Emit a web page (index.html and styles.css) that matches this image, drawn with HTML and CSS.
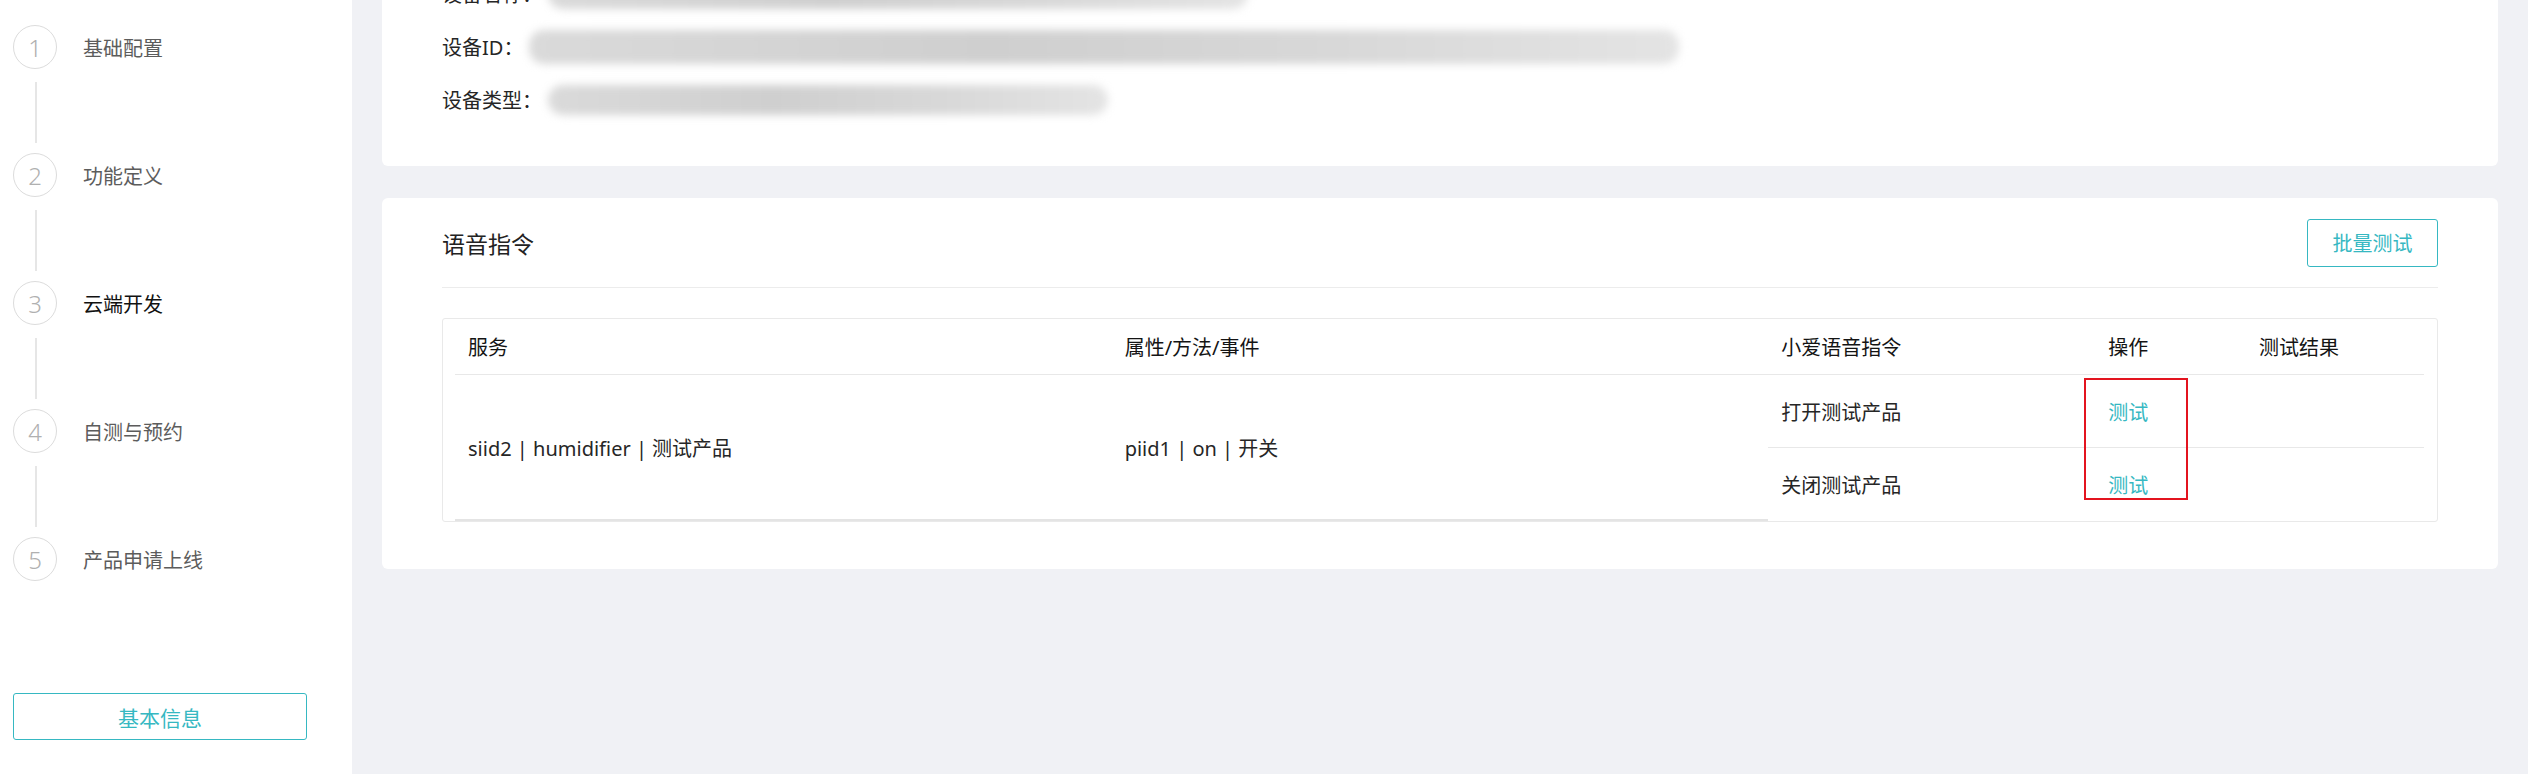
FILE: index.html
```html
<!DOCTYPE html>
<html>

<head>
    <meta charset='UTF-8'>
    <title>云端开发</title>
    <link rel="stylesheet" href="styles.css">
</head>

<body>
    <!-- Steps sidebar -->
    <aside class='sidebar'>
        <div class='steps'>
            <div class='step'>
                <span class='step-num'>1</span>
                <span class='step-label'>基础配置</span>
            </div>
            <div class='step-line'></div>
            <div class='step'>
                <span class='step-num'>2</span>
                <span class='step-label'>功能定义</span>
            </div>
            <div class='step-line'></div>
            <div class='step active'>
                <span class='step-num'>3</span>
                <span class='step-label'>云端开发</span>
            </div>
            <div class='step-line'></div>
            <div class='step'>
                <span class='step-num'>4</span>
                <span class='step-label'>自测与预约</span>
            </div>
            <div class='step-line'></div>
            <div class='step'>
                <span class='step-num'>5</span>
                <span class='step-label'>产品申请上线</span>
            </div>
        </div>
        <button class='info-btn'>基本信息</button>
    </aside>

    <main class='content'>
        <!-- Device info card -->
        <section class='card device-card'>
            <div class='info-row'>设备名称：<span class='redact redact-a'></span></div>
            <div class='info-row'>设备ID：<span class='redact redact-b'></span></div>
            <div class='info-row'>设备类型：<span class='redact redact-c'></span></div>
        </section>

        <!-- Voice commands card -->
        <section class='card voice-card'>
            <div class='card-header'>
                <h2 class='card-title'>语音指令</h2>
                <button class='outline-btn'>批量测试</button>
            </div>

            <div class='table-box'>
                <table class='voice-table'>
                    <colgroup>
                        <col class='col-service'>
                        <col class='col-prop'>
                        <col class='col-cmd'>
                        <col class='col-op'>
                        <col class='col-result'>
                    </colgroup>
                    <thead>
                        <tr>
                            <th>服务</th>
                            <th>属性/方法/事件</th>
                            <th>小爱语音指令</th>
                            <th>操作</th>
                            <th>测试结果</th>
                        </tr>
                    </thead>
                    <tbody>
                        <tr>
                            <td rowspan='2' class='span-cell'>siid2 | humidifier | 测试产品</td>
                            <td rowspan='2' class='span-cell'>piid1 | on | 开关</td>
                            <td class='row-line'>打开测试产品</td>
                            <td class='row-line op-cell'>
                                <a href='#' class='test-link'>测试</a>
                                <span class='mark-box'></span>
                            </td>
                            <td class='row-line'></td>
                        </tr>
                        <tr>
                            <td>关闭测试产品</td>
                            <td><a href='#' class='test-link'>测试</a></td>
                            <td></td>
                        </tr>
                    </tbody>
                </table>
            </div>
        </section>
    </main>
</body>

</html>
```

FILE: styles.css
```css
:root {
    --teal: #36b8c2;
    --line: #e8e8e8;
    --text: #262626;
}

body {
    font-family: "Noto Sans", "Noto Sans CJK SC", sans-serif;
    margin: 0;
    height: 100vh;
    overflow: hidden;
    display: flex;
    background-color: #f0f1f5;
    color: var(--text);
}

/* sidebar */
.sidebar {
    width: 352px;
    flex-shrink: 0;
    background: #ffffff;
    box-sizing: border-box;
    padding: 25px 0 34px 13px;
    display: flex;
    flex-direction: column;
    justify-content: space-between;
}

.step {
    display: flex;
    align-items: center;
    height: 44px;
}

.step-num {
    width: 42px;
    height: 42px;
    border: 1px solid #dcdcdc;
    border-radius: 50%;
    display: flex;
    align-items: center;
    justify-content: center;
    font-size: 24px;
    font-weight: 300;
    color: #b0b0b0;
}

.step-label {
    margin-left: 26px;
    font-size: 20px;
    color: #5c5c5c;
}

.step.active .step-label {
    color: #111111;
}

.step-line {
    width: 2px;
    height: 61px;
    margin: 13px 0 10px 22px;
    background: #e6e6e6;
}

.info-btn {
    width: 294px;
    height: 47px;
    background: #ffffff;
    border: 1px solid var(--teal);
    border-radius: 3px;
    color: var(--teal);
    font-family: inherit;
    font-size: 21px;
    cursor: pointer;
}

/* main area */
.content {
    flex: 1;
    padding: 0 30px;
    display: flex;
    flex-direction: column;
    gap: 32px;
}

.card {
    background: #ffffff;
    border-radius: 6px;
    padding: 0 60px;
}

.device-card {
    margin-top: -33px;
    padding-bottom: 40px;
    border-radius: 0 0 6px 6px;
}

.info-row {
    height: 53px;
    font-size: 20px;
    display: flex;
    align-items: center;
}

.redact {
    display: inline-block;
    height: 30px;
    margin-left: 6px;
    border-radius: 15px;
    background: linear-gradient(90deg, #dadada, #cfcfcf 40%, #d8d8d8 70%, #e4e4e4);
    filter: blur(4px);
}

.redact-a {
    width: 700px;
}

.redact-b {
    width: 1150px;
    height: 34px;
}

.redact-c {
    width: 560px;
}

.voice-card {
    padding-bottom: 47px;
}

.card-header {
    height: 89px;
    display: flex;
    align-items: center;
    justify-content: space-between;
    border-bottom: 1px solid #ececec;
}

.card-title {
    margin: 0;
    font-size: 23px;
    font-weight: normal;
    color: #222222;
}

.outline-btn {
    width: 131px;
    height: 48px;
    background: #ffffff;
    border: 1px solid var(--teal);
    border-radius: 3px;
    color: var(--teal);
    font-family: inherit;
    font-size: 20px;
    cursor: pointer;
}

/* table */
.table-box {
    margin-top: 30px;
    border: 1px solid #e9e9e9;
    border-radius: 3px;
    padding: 0 13px 0 12px;
}

.voice-table {
    width: 100%;
    table-layout: fixed;
    border-collapse: collapse;
    font-size: 20px;
}

.col-service,
.col-prop {
    width: 33.35%;
}

.col-cmd {
    width: 16.6%;
}

.col-op {
    width: 7.66%;
}

.voice-table th {
    height: 55px;
    padding: 0 13px;
    text-align: left;
    font-weight: normal;
    color: #141414;
    border-bottom: 1px solid var(--line);
}

.voice-table td {
    height: 72px;
    padding: 0 13px;
    color: var(--text);
}

.voice-table td.span-cell {
    border-bottom: 2px solid #e4e4e4;
}

.voice-table td.row-line {
    border-bottom: 1px solid var(--line);
}

.op-cell {
    position: relative;
}

.test-link {
    color: var(--teal);
    text-decoration: none;
}

/* red annotation frame */
.mark-box {
    position: absolute;
    left: -11px;
    top: 3px;
    width: 100px;
    height: 118px;
    border: 2px solid #e3141f;
}
```
